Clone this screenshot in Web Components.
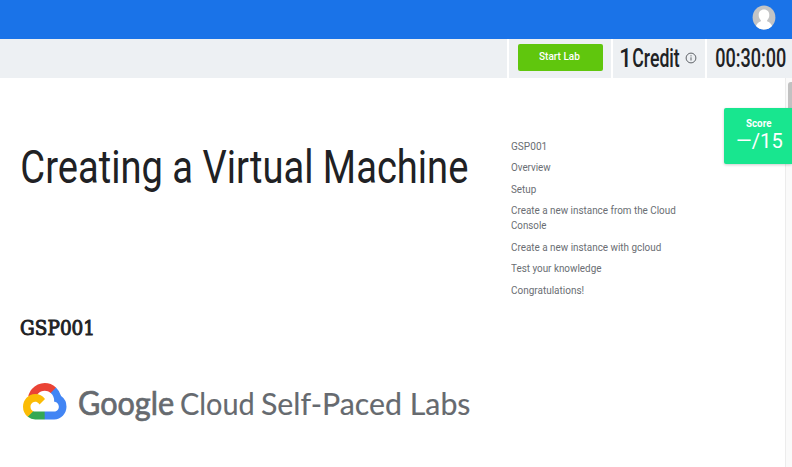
<!DOCTYPE html>
<html lang="en"><head><meta charset="utf-8"><title>Creating a Virtual Machine</title>
<style>body{margin:0;background:#fff;overflow:hidden}</style></head><body>
<lab-page></lab-page>
<script>
// A single line of text condensed or widened so its ink spans the "w" attribute.
class FitText extends HTMLElement{
  connectedCallback(){
    const r=this.attachShadow({mode:'open'});
    r.innerHTML='<style>:host{display:block;white-space:nowrap;flex:none}span{display:inline-block;transform-origin:0 50%}</style><span><slot></slot></span>';
    const w=+this.getAttribute('w'),c=getComputedStyle(this),g=document.createElement('canvas').getContext('2d');
    g.font=`${c.fontWeight} ${c.fontSize} ${c.fontFamily}`;
    const m=g.measureText(this.textContent),ink=m.actualBoundingBoxLeft+m.actualBoundingBoxRight,s=w/ink;
    this.style.width=w+'px';
    r.querySelector('span').style.transform=`translateX(${m.actualBoundingBoxLeft*s}px) scaleX(${s})`;
  }
}
class UserAvatar extends HTMLElement{
  connectedCallback(){
    this.attachShadow({mode:'open'}).innerHTML=`<style>:host{display:block;width:24px;height:25px}svg{display:block}</style>
    <svg width="24" height="25" viewBox="0 0 24 25"><defs><clipPath id="c"><ellipse cx="12" cy="12.5" rx="11.4" ry="12"/></clipPath></defs><g clip-path="url(#c)"><path fill="#c3c4c5" d="M0 0h24v25H0z"/><path fill="#fff" d="M12 4.5c3.3 0 5.3 2.3 5.3 5.5 0 2.3-.9 4.1-2.2 5.2v1c2.400.8 4 2.500 5 4.800V25H3.900v-4c1-2.300 2.600-4 5-4.800v-1C7.600 14.100 6.700 12.300 6.700 10c0-3.200 2-5.500 5.300-5.500z"/></g></svg>`;
  }
}
class TopBar extends HTMLElement{
  connectedCallback(){
    this.attachShadow({mode:'open'}).innerHTML=`<style>:host{display:flex;height:38.500px;background:#1a73e8;justify-content:flex-end;align-items:flex-start;padding:5px 16px 0 0;box-sizing:border-box}</style><user-avatar></user-avatar>`;
  }
}
class ControlBar extends HTMLElement{
  connectedCallback(){
    this.attachShadow({mode:'open'}).innerHTML=`<style>
    :host{display:grid;grid-template-columns:507px 102px 92px 1fr;column-gap:2px;height:39.500px;background:#fff}
    div{background:#edf0f3;display:flex;box-sizing:border-box}
    .start{padding:5.500px 0 0 9px}
    button{width:85px;height:27px;border:0;border-radius:2px;background:#60c60d;color:#fff;padding:0 1.500px 1.500px 0;display:flex;justify-content:center;align-items:center;font:500 10.500px/12px Roboto,sans-serif}
    .big{font:500 25px/30px Roboto,sans-serif;color:#202124;padding-top:5.500px}
    .credit{padding-left:8px}.time{padding-left:9px}
    .one{margin-right:5px}
    svg{margin:8px 0 0 5px}
    </style>
    <div></div>
    <div class="start"><button><fit-text w="41">Start Lab</fit-text></button></div>
    <div class="big credit"><fit-text class="one" w="7">1</fit-text><fit-text w="46.500">Credit</fit-text><svg width="12" height="12" viewBox="0 0 12 12"><circle cx="6" cy="6" r="4.900" fill="none" stroke="#5f6368"/><path d="M6 5.300v3.200M6 3.300v1.100" stroke="#5f6368"/></svg></div>
    <div class="big time"><fit-text w="69.500">00:30:00</fit-text></div>`;
  }
}
class CloudLogo extends HTMLElement{
  connectedCallback(){
    this.attachShadow({mode:'open'}).innerHTML=`<style>:host{display:block}svg{display:block}</style>
    <svg width="43.500" height="36.500" viewBox="0 0 256 206" preserveAspectRatio="none">
    <path fill="#ea4335" d="M170.252 56.819l22.253-22.253 1.483-9.370C153.437-11.677 88.976-7.496 52.420 33.920 42.267 45.423 34.734 59.764 30.717 74.573l7.970-1.123 44.505-7.340 3.436-3.513c19.797-21.742 53.270-24.667 76.128-6.168z"/>
    <path fill="#4285f4" d="M224.205 73.918a100.249 100.249 0 0 0-30.217-48.722l-31.232 31.232a55.515 55.515 0 0 1 20.379 44.037v5.544c15.351 0 27.797 12.445 27.797 27.796 0 15.352-12.446 27.485-27.797 27.485h-55.671l-5.466 5.934v33.340l5.466 5.231h55.670c39.930.311 72.553-31.494 72.864-71.424a72.303 72.303 0 0 0-31.793-60.453"/>
    <path fill="#34a853" d="M71.870 205.796h55.593V161.290H71.870a27.275 27.275 0 0 1-11.400-2.498l-7.887 2.420-22.409 22.253-1.952 7.574a72.085 72.085 0 0 0 43.648 14.757"/>
    <path fill="#fbbc05" d="M71.870 61.425C31.940 61.664-.237 94.228.002 134.158a72.301 72.301 0 0 0 28.222 56.880l32.248-32.246c-13.990-6.323-20.208-22.786-13.885-36.776 6.323-13.990 22.786-20.208 36.776-13.885 6.165 2.787 11.098 7.720 13.885 13.885l32.248-32.248A72.224 72.224 0 0 0 71.870 61.425"/></svg>`;
  }
}
class LabBrand extends HTMLElement{
  connectedCallback(){
    this.attachShadow({mode:'open'}).innerHTML=`<style>:host{display:flex;align-items:flex-start;color:#666a6f;font:400 30px/40px Lato,sans-serif}
    cloud-logo{margin:0 12px 0 0}.g{font-size:32.500px;-webkit-text-stroke:.7px;margin-right:8px}.c{margin-right:8px}.t{-webkit-text-stroke:.15px}</style>
    <cloud-logo></cloud-logo><fit-text class="g" w="94">Google</fit-text><fit-text class="c t" w="72">Cloud</fit-text><fit-text class="t" w="208.500">Self-Paced Labs</fit-text>`;
  }
}
class LabArticle extends HTMLElement{
  connectedCallback(){
    this.attachShadow({mode:'open'}).innerHTML=`<style>:host{display:block;padding:61px 0 0 22px;color:#202124;box-sizing:border-box}
    h1{margin:0;font:400 46.500px/56px Roboto,sans-serif}h2{margin:120px 0 0 -1px;font:400 21px/26px "DejaVu Serif",serif;-webkit-text-stroke:1px}
    lab-brand{margin:42px 0 0 1.300px}</style>
    <h1><fit-text w="445">Creating a Virtual Machine</fit-text></h1><h2><fit-text w="72">GSP001</fit-text></h2><lab-brand></lab-brand>`;
  }
}
class LabOutline extends HTMLElement{
  connectedCallback(){
    const items=[[['GSP001',34.500]],[['Overview',40]],[['Setup',25.500]],[['Create a new instance from the Cloud',165],['Console',36]],[['Create a new instance with gcloud',150.500]],[['Test your knowledge',91]],[['Congratulations!',72.500]]];
    this.attachShadow({mode:'open'}).innerHTML=`<style>:host{display:block;padding-top:60.600px;font:400 10.200px/15.400px Roboto,sans-serif;color:#6a6e73}
    nav{display:flex;flex-direction:column;gap:6.050px}</style><nav>${items.map(l=>'<div>'+l.map(([t,w])=>`<fit-text w="${w}">${t}</fit-text>`).join('')+'</div>').join('')}</nav>`;
  }
}
class ScoreCard extends HTMLElement{
  connectedCallback(){
    this.attachShadow({mode:'open'}).innerHTML=`<style>:host{display:flex;flex-direction:column;align-items:flex-start;box-sizing:border-box;width:68px;height:56px;background:#18e68f;border-radius:2px 0 0 2px;box-shadow:0 1px 3px #0003;color:#fff;font-family:Roboto,sans-serif}
    .l{font-weight:700;font-size:10px;line-height:12px;margin:9.500px 0 0 22.400px}.n{font-size:21px;line-height:24px;display:flex;margin:-1px 0 0 13.300px}</style>
    <fit-text class="l" w="26">Score</fit-text><div class="n"><fit-text w="45">—/15</fit-text></div>`;
  }
}
class LabPage extends HTMLElement{
  connectedCallback(){
    this.attachShadow({mode:'open'}).innerHTML=`<style>:host{display:flex;flex-direction:column;width:792px;height:467px;position:relative;overflow:hidden;background:#fff}
    main{display:grid;grid-template-columns:510.800px 1fr 7px;flex:1;min-height:0}
    .track{background:#fafafa;border-left:1px solid #ececec;display:flex;justify-content:flex-end;padding-top:4px;box-sizing:border-box}
    .thumb{width:4px;height:60px;background:#c1c1c1;border-radius:3px 0 0 3px}
    score-card{position:absolute;right:0;top:108px}</style>
    <top-bar></top-bar><control-bar></control-bar>
    <main><lab-article></lab-article><lab-outline></lab-outline><div class="track"><div class="thumb"></div></div></main><score-card></score-card>`;
  }
}
for(const [n,c] of [['fit-text',FitText],['user-avatar',UserAvatar],['top-bar',TopBar],['control-bar',ControlBar],['cloud-logo',CloudLogo],['lab-brand',LabBrand],['lab-article',LabArticle],['lab-outline',LabOutline],['score-card',ScoreCard],['lab-page',LabPage]])customElements.define(n,c);
</script></body></html>
